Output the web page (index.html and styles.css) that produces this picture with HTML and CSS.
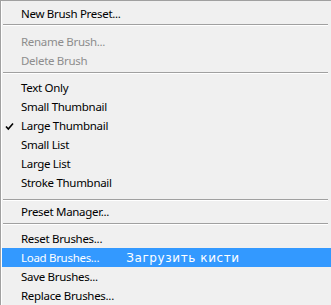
FILE: index.html
```html
<!DOCTYPE html>
<html lang="en">
<head>
  <meta charset="UTF-8">
  <meta name="viewport" content="width=device-width, initial-scale=1.0">
  <title>Brush Preset Menu</title>
  <link rel="stylesheet" href="styles.css">
</head>
<body>
  <div class="menu">
    <div class="item">New Brush Preset...</div>
    <div class="separator"></div>

    <div class="item disabled">Rename Brush...</div>
    <div class="item disabled">Delete Brush</div>
    <div class="separator separator-low"></div>

    <div class="item">Text Only</div>
    <div class="item">Small Thumbnail</div>
    <div class="item checked">
      <svg class="check" width="9" height="9" viewBox="0 0 9 9">
        <path d="M1 4.5 L3.3 7 L8 1.5" fill="none" stroke="#000" stroke-width="1.6"/>
      </svg>
      Large Thumbnail
    </div>
    <div class="item">Small List</div>
    <div class="item">Large List</div>
    <div class="item">Stroke Thumbnail</div>
    <div class="separator separator-wide"></div>

    <div class="item">Preset Manager...</div>
    <div class="separator separator-low"></div>

    <div class="item">Reset Brushes...</div>
    <div class="item active">Load Brushes...<span class="hint">Загрузить кисти</span></div>
    <div class="item">Save Brushes...</div>
    <div class="item">Replace Brushes...</div>
  </div>
</body>
</html>
```

FILE: styles.css
```css
body {
  margin: 0;
  background-color: #f0f0f0;
  font-family: "Noto Sans", "Open Sans", sans-serif;
  font-size: 11.5px;
  letter-spacing: -0.3px;
}

.menu {
  height: 305px;
  padding-top: 3px;
  border-top: 1px solid #a0a0a0;
  border-left: 1px solid #a0a0a0;
  box-shadow: inset 1px 0 0 #ffffff;
  box-sizing: border-box;
  overflow: hidden;
}

.item {
  position: relative;
  height: 19px;
  line-height: 19px;
  padding-left: 20px;
  color: #000;
  white-space: nowrap;
}

.item.disabled {
  color: #8d8d8d;
}

.item.active {
  background-color: #3399ff;
  color: #ffffff;
  margin-left: 1px;
  padding-left: 19px;
}

.hint {
  margin-left: 27px;
  font-family: "DejaVu Sans", sans-serif;
  font-size: 12px;
  letter-spacing: 0.6px;
}

.check {
  position: absolute;
  left: 4px;
  top: 6px;
}

.separator {
  height: 9px;
  margin-left: 2px;
  margin-right: 3px;
  box-sizing: border-box;
  padding-top: 1px;
}

.separator::before {
  content: "";
  display: block;
  height: 1px;
  background-color: #a0a0a0;
  border-bottom: 1px solid #ffffff;
}

.separator-low {
  height: 8px;
  padding-top: 2px;
}

.separator-wide {
  height: 10px;
  padding-top: 7px;
}
```
